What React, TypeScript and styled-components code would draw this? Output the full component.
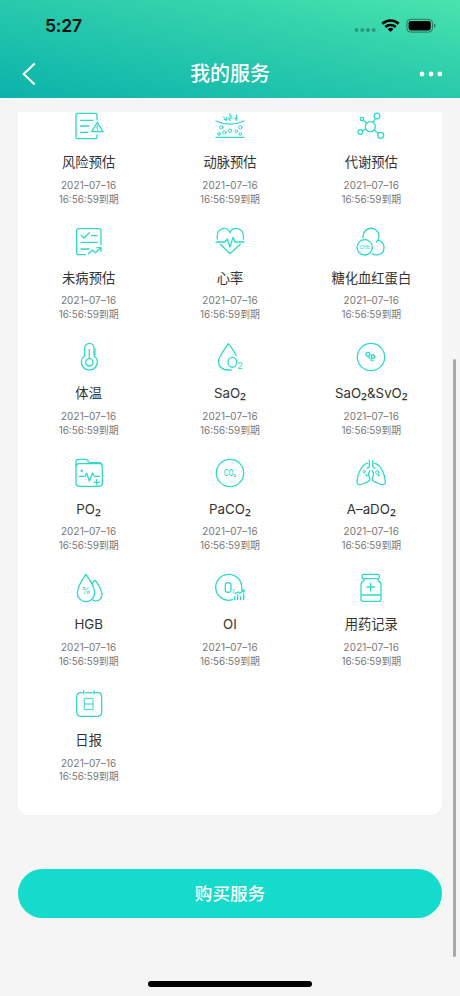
import React from 'react';
import styled, { createGlobalStyle } from 'styled-components';

const GlobalStyle = createGlobalStyle`
  * { box-sizing: border-box; }
  body {
    margin: 0;
    background: #f5f5f5;
    font-family: Inter, "Noto Sans CJK SC", sans-serif;
  }
`;

const Screen = styled.div`
  position: relative;
  display: flex;
  flex-direction: column;
  width: 460px;
  height: 996px;
  overflow: hidden;
  background: #f5f5f5;
`;

const Header = styled.header`
  flex: none;
  height: 98px;
  background: linear-gradient(to top right, #0cb2ab 0%, #28c9ac 50%, #49e3ad 100%);
`;

const StatusBar = styled.div`
  display: flex;
  align-items: center;
  justify-content: space-between;
  height: 50px;
  padding: 2px 23px 0 45px;
`;

const Clock = styled.span`
  font-size: 17.6px;
  font-weight: 600;
  line-height: 22px;
  letter-spacing: -0.2px;
  color: #06110f;
`;

const NavBar = styled.nav`
  display: grid;
  grid-template-columns: 60px 1fr 60px;
  align-items: center;
  height: 48px;
  color: #fff;
`;

const NavButton = styled.button<{ $end?: boolean }>`
  display: flex;
  justify-content: ${(p) => (p.$end ? 'flex-end' : 'flex-start')};
  padding: ${(p) => (p.$end ? '0 17px 0 0' : '0 0 0 21px')};
  border: 0;
  background: none;
  color: inherit;
`;

const Title = styled.h1`
  margin: 0;
  font-size: 19.9px;
  font-weight: 500;
  line-height: 28px;
  text-align: center;
`;

const Card = styled.main`
  flex: none;
  display: grid;
  grid-template-columns: repeat(3, 1fr);
  grid-auto-rows: 115.6px;
  align-content: start;
  height: 703px;
  margin: 14px 18px 0;
  background: #fff;
  border-radius: 0 0 11px 11px;
`;

const Service = styled.section`
  display: flex;
  flex-direction: column;
  align-items: center;
`;

const Glyph = styled.svg`
  display: block;
  flex: none;
  width: 28px;
  height: 28px;
  overflow: visible;
  fill: none;
  stroke: #2fd9ca;
  stroke-width: 3.9;
  stroke-linecap: round;
  stroke-linejoin: round;

  text {
    fill: #2fd9ca;
    stroke: none;
    text-anchor: middle;
    font-family: Inter, sans-serif;
  }
`;

const Name = styled.h2`
  margin: 12px 0 0;
  font-size: 13.3px;
  font-weight: 400;
  line-height: 20px;
  color: #333;
  white-space: nowrap;
`;

const Subscript = styled.span`
  font-family: "Noto Sans", sans-serif;
  font-size: 17px;
  line-height: 1px;
`;

const Expiry = styled.p`
  margin: 6.6px 0 0;
  font-size: 9.9px;
  line-height: 13.9px;
  text-align: center;
  color: #777;
`;

const ExpiryDate = styled.span`
  display: block;
  letter-spacing: 0.15px;
`;

const BuyButton = styled.button`
  flex: none;
  height: 49px;
  margin: 54px 18px 0;
  border: 0;
  border-radius: 25px;
  background: #14dbcb;
  color: #fff;
  font: 500 17.6px/26px Inter, "Noto Sans CJK SC", sans-serif;
`;

const HomeIndicator = styled.div`
  flex: none;
  width: 164px;
  height: 6px;
  margin: 63px auto 0;
  border-radius: 3px;
  background: #000;
`;

const ScrollThumb = styled.div`
  position: absolute;
  top: 359px;
  right: 4px;
  width: 3px;
  height: 598px;
  border-radius: 2px;
  background: #a9a9a9;
`;

const icons: Record<string, React.ReactNode> = {
  risk: (
    <>
      <path d="M66 24V10q0-6-6-6H9q-6 0-6 6v64q0 6 6 6h51q6 0 6-6v-5M16 25h38M16 42h26M16 61h22M67 31 50 59h34z" />
      <path d="M67 41v8M67 53v1" />
    </>
  ),
  artery: (
    <>
      <path d="M0 27Q42 46 84 27M0 76h84" />
      <path strokeWidth="3" d="m22 14 10 11v-9M24 22l8 3M42 4v22l-5-8M45 10v8l4 1M61 8v18l-5-8h9" />
      <g strokeWidth="3">
        <circle cx="16" cy="46" r="5" /><circle cx="9" cy="66" r="4" /><circle cx="25" cy="61" r="5" />
        <circle cx="42" cy="56" r="5" /><circle cx="61" cy="58" r="4" /><circle cx="73" cy="46" r="5" />
        <circle cx="73" cy="66" r="4" />
      </g>
    </>
  ),
  molecule: (
    <>
      <circle cx="40" cy="44" r="15" /><circle cx="60" cy="12" r="8.5" /><circle cx="15" cy="21" r="5" />
      <circle cx="10" cy="60" r="7" /><circle cx="71" cy="70" r="9" />
      <path d="m48 31 7-12M29 34 19 25M26 51l-9 5M51 54l13 10" />
    </>
  ),
  checklist: (
    <path d="M78 50V8q0-6-6-6H11q-6 0-6 6v66q0 6 6 6h20M18 22l9 8 16-16M49 23h18M18 43h49M18 63h24M41 77l11-11 9 8 16-14M66 59h12v11" />
  ),
  heart: (
    <path d="M4 34v-9C4-3 35-5 42 14 50-5 82-3 82 25v9M13 49l29 28 31-28M0 42h27l7-9 8 24 9-29 6 14h27" />
  ),
  hemoglobin: (
    <>
      <circle cx="23" cy="58" r="23" />
      <path d="M18 29C16-8 66-8 66 25q0 9-8 17M63 37c24 5 24 39 0 43q-10 2-17-3" />
      <text x="23" y="63" fontSize="15">CHb</text>
    </>
  ),
  thermometer: (
    <>
      <path d="M29 38V15a14 14 0 0 1 28 0v23a24 24 0 1 1-28 0M43 19v27M57 20h5M57 27h5M57 34h5" />
      <circle cx="43" cy="58" r="11" />
    </>
  ),
  oxygenDrop: (
    <>
      <path d="M60 37Q50 17 37 2C20 26 7 43 7 55q2 26 30 26h9" />
      <ellipse cx="49" cy="58" rx="13" ry="15" />
      <text x="72" y="77" fontSize="28">2</text>
    </>
  ),
  cell: (
    <>
      <circle cx="42" cy="42" r="41" />
      <circle cx="33" cy="34" r="6" /><circle cx="48" cy="41" r="5" />
      <path strokeWidth="2.500" d="m33 46 5-4 1 7 6-3M40 53l5-3 2 5 4-3" />
    </>
  ),
  folder: (
    <>
      <path d="M3 22V9q0-8 8-8h20q6 0 9 6l3 4h29q8 0 8 5" />
      <path d="M3 24q0-10 10-10h60q9 0 9 9v50q0 9-9 9H12q-9 0-9-9z" />
      <path d="M13 52h17l5-9 8 23 10-24 5 10h16M65 62v16M57 70h16M20 33v5M17.500 35.500h5" />
    </>
  ),
  carbonDioxide: (
    <>
      <circle cx="42" cy="42" r="41" />
      <text x="42" y="51" fontSize="27" fontWeight="500" textLength="38" lengthAdjust="spacingAndGlyphs">CO₂</text>
    </>
  ),
  lungs: (
    <>
      <path d="M37 4v17q0 5-7 7M47 4v17q0 5 7 7" />
      <path d="M31 13C16 14 0 45 0 69c0 10 9 9 17 6l17-8q8-4 2-15-4-8 3-17M53 13c15 1 32 32 32 56 0 10-9 9-17 6l-18-8q-7-4-2-15 4-8-2-17" />
      <g strokeWidth="3">
        <circle cx="22" cy="38" r="3.500" /><circle cx="28" cy="49" r="2" /><circle cx="61" cy="40" r="5" />
        <circle cx="65" cy="49" r="2" />
      </g>
    </>
  ),
  bloodDrops: (
    <>
      <path d="M33 1C18 22 7 40 7 57a26 26 0 0 0 52 0C59 40 48 22 33 1zM51 28q4-6 10-9c10 14 20 30 20 43 0 12-10 20-22 18l-7-2" />
      <text x="33" y="61" fontSize="26" fontWeight="500">%</text>
    </>
  ),
  oxygenIndex: (
    <>
      <path d="M77 43A39 39 0 1 0 50 77" />
      <rect x="28" y="26" width="17" height="29" rx="8" />
      <text x="52" y="57" fontSize="14">2</text>
      <path d="M56 77V68M65 77V63M74 77V68M83 77V60M57 59l9-5 6 4 12-10M77 48h7v7" />
    </>
  ),
  bottle: (
    <path d="M19 1h44q4 0 4 4v5q0 4-4 4H19q-4 0-4-4V5q0-4 4-4zM21 14v5q-9 5-9 14v43q0 6 6 6h48q6 0 6-6V33q0-9-9-14v-5M12 63h60M41 28v23M30 39h23" />
  ),
  calendar: (
    <>
      <path d="M26 8h-7Q5 8 5 21v45q0 13 14 13h48q13 0 13-13V21Q80 8 67 8h-9M32 8h20M26 2v9M57 2v9" />
      <path d="M29 25h25v34H29zM29 42h25" strokeWidth="3" />
    </>
  ),
};

const services = [
  { icon: 'risk', name: '风险预估' },
  { icon: 'artery', name: '动脉预估' },
  { icon: 'molecule', name: '代谢预估' },
  { icon: 'checklist', name: '未病预估' },
  { icon: 'heart', name: '心率' },
  { icon: 'hemoglobin', name: '糖化血红蛋白' },
  { icon: 'thermometer', name: '体温' },
  { icon: 'oxygenDrop', name: 'SaO₂' },
  { icon: 'cell', name: 'SaO₂&SvO₂' },
  { icon: 'folder', name: 'PO₂' },
  { icon: 'carbonDioxide', name: 'PaCO₂' },
  { icon: 'lungs', name: 'A–aDO₂' },
  { icon: 'bloodDrops', name: 'HGB' },
  { icon: 'oxygenIndex', name: 'OI' },
  { icon: 'bottle', name: '用药记录' },
  { icon: 'calendar', name: '日报' },
];

function Label({ text }: { text: string }) {
  return (
    <Name>
      {text.split(/(₂)/).map((part, i) => (part === '₂' ? <Subscript key={i}>₂</Subscript> : part))}
    </Name>
  );
}

export default function App() {
  return (
    <Screen>
      <GlobalStyle />
      <Header>
        <StatusBar>
          <Clock>5:27</Clock>
          <svg width="84" height="18" viewBox="0 0 84 18">
            <g fill="#000" fillOpacity=".28">
              <circle cx="3.500" cy="13" r="2" /><circle cx="9.300" cy="13" r="2" />
              <circle cx="15" cy="13" r="2" /><circle cx="20.700" cy="13" r="2" />
            </g>
            <g transform="translate(-1 0)">
              <g fill="none" stroke="#000" strokeWidth="2.600">
                <path d="M30.300 6.800a12 12 0 0 1 16.400 0" />
                <path d="M33.300 10a7.600 7.600 0 0 1 10.400 0" />
              </g>
              <path d="m35.600 12.100a4.300 4.300 0 0 1 5.800 0l-2.900 2.900z" />
              <rect x="54.900" y="2.300" width="25.600" height="12.800" rx="3.800" fill="none" stroke="#000" strokeOpacity=".45" />
              <rect x="56.600" y="4" width="22.200" height="9.400" rx="2.300" />
              <path d="M82 6.700q3 2 0 4z" fillOpacity=".5" />
            </g>
          </svg>
        </StatusBar>
        <NavBar>
          <NavButton aria-label="返回">
            <svg width="16" height="24" viewBox="0 0 16 24" fill="none" stroke="#fff" strokeWidth="2">
              <path d="M13.700 1.500 2.700 12l11 10.500" />
            </svg>
          </NavButton>
          <Title>我的服务</Title>
          <NavButton $end aria-label="更多">
            <svg width="24" height="6" viewBox="0 0 24 6" fill="#fff">
              <circle cx="3" cy="3" r="2.400" /><circle cx="12" cy="3" r="2.400" /><circle cx="20.800" cy="3" r="2.400" />
            </svg>
          </NavButton>
        </NavBar>
      </Header>
      <Card>
        {services.map((s) => (
          <Service key={s.icon}>
            <Glyph viewBox="0 0 84 84">{icons[s.icon]}</Glyph>
            <Label text={s.name} />
            <Expiry>
              <ExpiryDate>2021–07–16</ExpiryDate>
              16:56:59到期
            </Expiry>
          </Service>
        ))}
      </Card>
      <BuyButton>购买服务</BuyButton>
      <HomeIndicator />
      <ScrollThumb />
    </Screen>
  );
}
